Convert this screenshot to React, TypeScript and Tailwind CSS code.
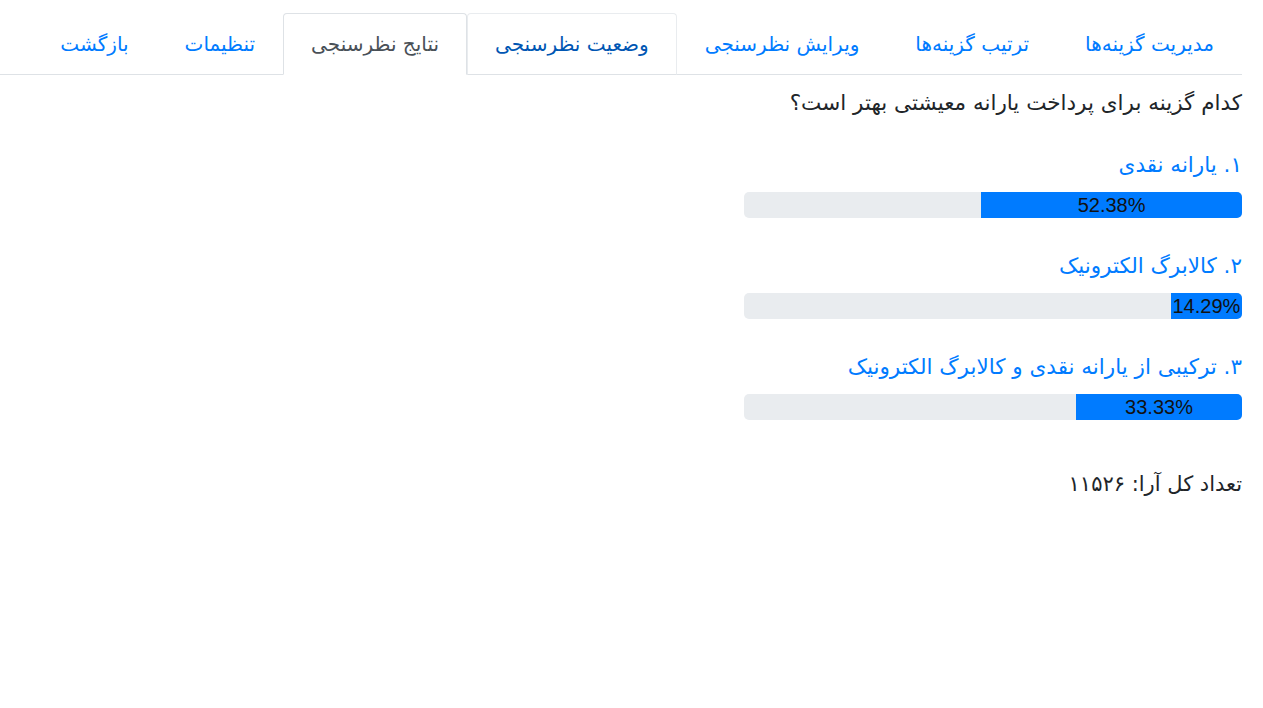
const tabs = [
  { label: "مدیریت گزینه‌ها" },
  { label: "ترتیب گزینه‌ها" },
  { label: "ویرایش نظرسنجی" },
  { label: "وضعیت نظرسنجی", hover: true },
  { label: "نتایج نظرسنجی", active: true },
  { label: "تنظیمات" },
  { label: "بازگشت" },
];

const results = [
  { num: "۱", title: "یارانه نقدی", percent: 52.38 },
  { num: "۲", title: "کالابرگ الکترونیک", percent: 14.29 },
  { num: "۳", title: "ترکیبی از یارانه نقدی و کالابرگ الکترونیک", percent: 33.33 },
];

const App = () => {
  return (
    <div
      dir="rtl"
      className="min-h-screen bg-white pr-[21px] pt-[13px] text-[#212529]"
      style={{ fontFamily: '"DejaVu Sans", "Noto Sans", sans-serif' }}
    >
      <ul className="flex border-b border-[#dee2e6]">
        {tabs.map((tab) => (
          <li key={tab.label} className="-mb-px">
            <a
              href="#"
              className={
                tab.active
                  ? "block rounded-t-[4px] border border-[#dee2e6] border-b-white bg-white px-[27px] py-[14px] text-[20px] leading-[32px] text-[#495057]"
                  : tab.hover
                    ? "block rounded-t-[4px] border border-[#e9ecef] border-b-[#dee2e6] px-[27px] py-[14px] text-[20px] leading-[32px] text-[#0056b3]"
                    : "block rounded-t-[4px] border border-transparent px-[27px] py-[14px] text-[20px] leading-[32px] text-[#007bff]"
              }
            >
              {tab.label}
            </a>
          </li>
        ))}
      </ul>

      <div className="w-[498px] pt-[13px]">
        <h5 className="whitespace-nowrap text-[21.5px] leading-[30px]">کدام گزینه برای پرداخت یارانه معیشتی بهتر است؟</h5>

        <div className="mt-[32px] flex flex-col gap-[33px]">
          {results.map((r) => (
            <div key={r.num}>
              <div className="whitespace-nowrap text-[21.5px] leading-[30px] text-[#007bff]">
                {r.num}. {r.title}
              </div>
              <div className="mt-[12px] flex h-[26px] overflow-hidden rounded-[5px] bg-[#e9ecef]">
                <div
                  className="flex items-center justify-center whitespace-nowrap bg-[#007bff] text-[20px] text-[#111]"
                  style={{ width: `${r.percent}%`, fontFamily: '"Liberation Sans", Arial, sans-serif' }}
                >
                  {r.percent}%
                </div>
              </div>
            </div>
          ))}
        </div>

        <p className="mt-[49px] text-[21px] leading-[30px]">تعداد کل آرا: ۱۱۵۲۶</p>
      </div>
    </div>
  );
};

export default App;
